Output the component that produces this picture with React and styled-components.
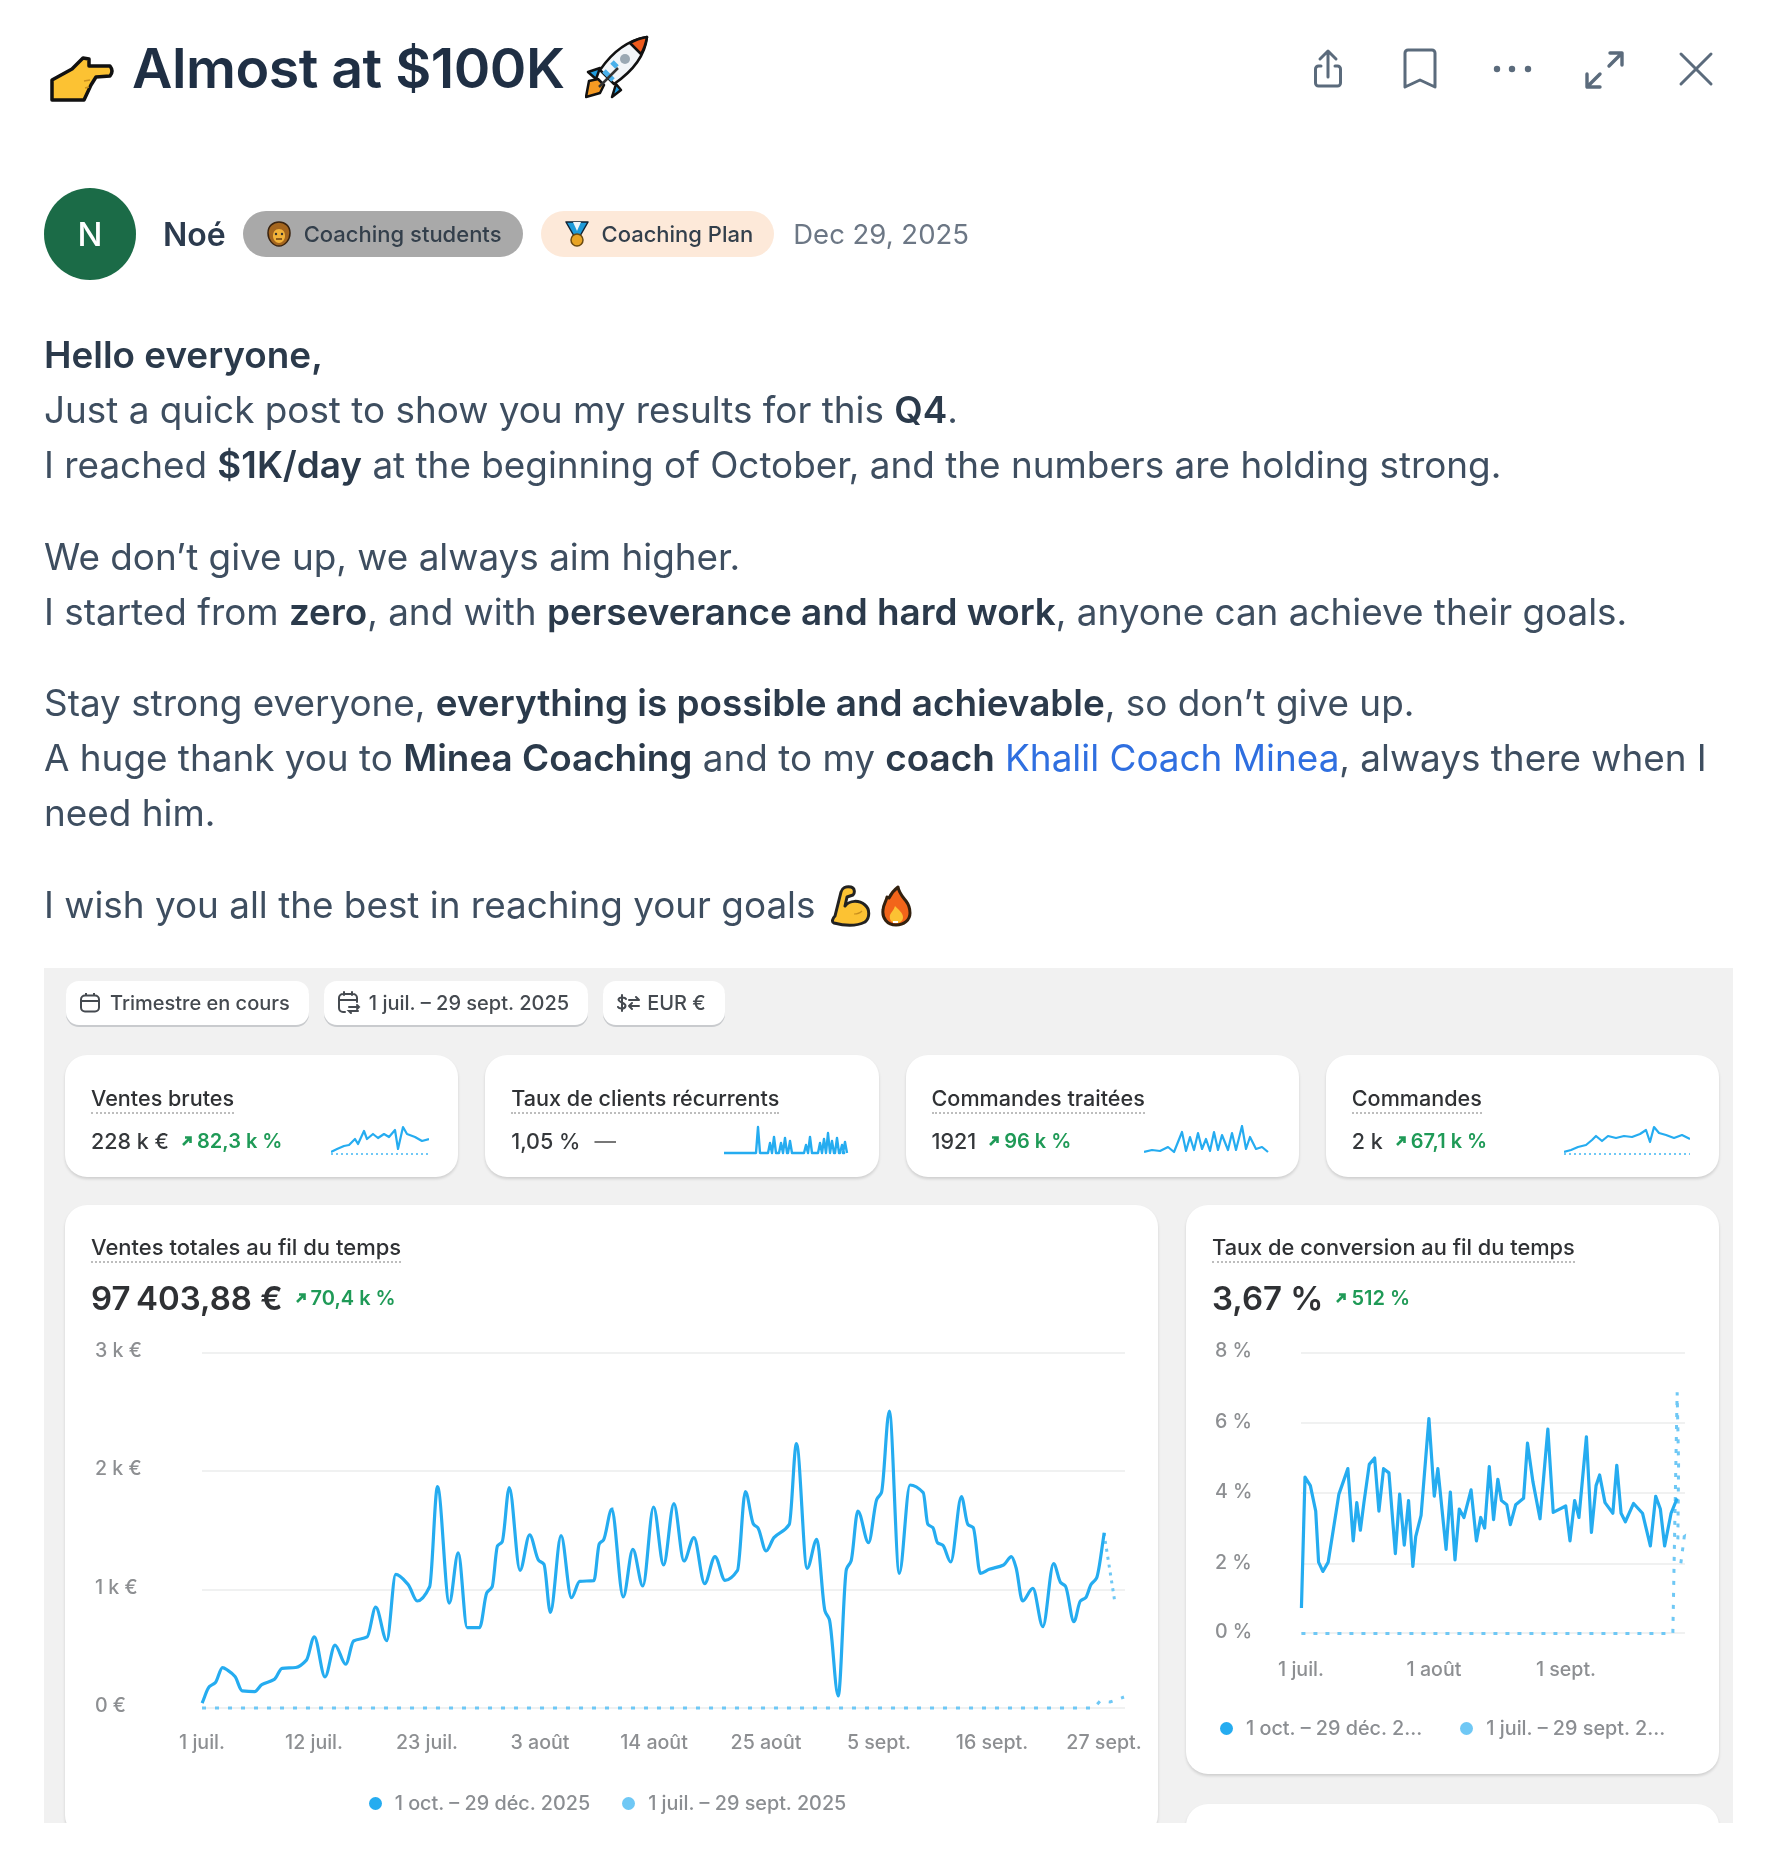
import React from "react";
import styled, { createGlobalStyle } from "styled-components";

const Global = createGlobalStyle`
  html, body { margin: 0; padding: 0; background: #fff; }
  body { font-family: Inter, "Noto Sans", "Liberation Sans", sans-serif; }
`;

const Page = styled.div`
  width: 1772px;
  height: 1866px;
  box-sizing: border-box;
  padding: 30px 39px 0 44px;
  overflow: hidden;
  background: #fff;
  filter: blur(0.6px);
`;

const Header = styled.header`
  display: flex;
  align-items: center;
  height: 78px;
  padding-right: 15px;
`;

const Title = styled.h1`
  margin: 0;
  padding-bottom: 4px;
  display: flex;
  align-items: center;
  font-size: 55.5px;
  font-weight: 600;
  letter-spacing: -0.5px;
  color: #1f2f44;
`;

const Actions = styled.div`
  margin-left: auto;
  display: flex;
  gap: 48px;
`;

const IconButton = styled.button`
  width: 44px;
  height: 44px;
  padding: 0;
  border: 0;
  background: none;
  color: #5b6b7c;
  svg { display: block; }
`;

const Author = styled.div`
  display: flex;
  align-items: center;
  margin-top: 80px;
`;

const Avatar = styled.div`
  width: 92px;
  height: 92px;
  border-radius: 50%;
  background: #1b6b47;
  color: #fff;
  font-size: 33px;
  font-weight: 500;
  display: flex;
  align-items: center;
  justify-content: center;
`;

const Name = styled.span`
  margin-left: 27px;
  font-size: 32px;
  font-weight: 600;
  color: #2c3b4e;
`;

const Badge = styled.span`
  height: 46px;
  box-sizing: border-box;
  margin-left: ${(p) => p.$gap}px;
  padding: 0 21px 0 23px;
  border-radius: 23px;
  background: ${(p) => p.$bg};
  display: flex;
  align-items: center;
  gap: 12px;
  font-size: 22px;
  font-weight: 500;
  color: #333f4b;
`;

const PostDate = styled.span`
  margin-left: 19px;
  font-size: 27.5px;
  color: #6c7785;
`;

const Body = styled.div`
  margin-top: 47px;
  font-size: 36.87px;
  line-height: 55px;
  color: #3e4e60;
  p { margin: 0 0 36.5px; }
  strong { font-weight: 600; color: #2b3a4b; }
  a { color: #2f6fe0; text-decoration: none; }
`;

const Panel = styled.section`
  height: 855px;
  margin-top: 1px;
  box-sizing: border-box;
  padding: 13px 14px 0 21px;
  background: #f1f1f1;
  overflow: hidden;
  filter: blur(0.45px);
`;

const Filters = styled.div`
  display: flex;
  gap: 15px;
  padding-left: 1px;
`;

const Pill = styled.div`
  height: 44px;
  box-sizing: border-box;
  padding: 0 19px 0 13px;
  border-radius: 13px;
  background: #fff;
  box-shadow: 0 2px 0 #c9cbce;
  display: flex;
  align-items: center;
  gap: ${(p) => p.$gap || 9}px;
  font-size: 20px;
  font-weight: 500;
  color: #454a50;
`;

const StatGrid = styled.div`
  display: grid;
  grid-template-columns: repeat(4, 1fr);
  gap: 27px;
  margin-top: 30px;
`;

const Card = styled.div`
  border-radius: 22px;
  background: #fff;
  box-shadow: 0 2px 3px rgba(0, 0, 0, 0.14);
`;

const StatCard = styled(Card)`
  height: 122px;
  box-sizing: border-box;
  padding: 30px 29px 0 26px;
`;

const Dotted = styled.span`
  display: inline-block;
  line-height: 26px;
  padding-bottom: 1px;
  font-size: ${(p) => p.$size || 21.6}px;
  font-weight: 500;
  color: #2f3134;
  border-bottom: 2px dotted #bdbdbd;
`;

const StatRow = styled.div`
  display: flex;
  align-items: center;
  height: 38px;
  margin-top: 8px;
  font-size: 21.5px;
  font-weight: 500;
  color: #35383b;
  svg:last-child { margin-left: auto; }
`;

const Delta = styled.span`
  display: inline-flex;
  align-items: center;
  gap: 5px;
  margin-left: ${(p) => p.$gap}px;
  font-size: 20px;
  font-weight: 600;
  color: #1f9a57;
`;

const Dash = styled.span`
  margin-left: 14px;
  color: #777;
`;

const MainGrid = styled.div`
  display: grid;
  grid-template-columns: 1093px 533px;
  gap: 28px;
  align-items: start;
  margin-top: 28px;
`;

const Column = styled.div`
  display: flex;
  flex-direction: column;
  gap: 30px;
`;

const ChartHead = styled.div`
  padding: 29px 26px 0;
`;

const BigValue = styled.div`
  display: flex;
  align-items: center;
  height: 40px;
  margin-top: 15px;
  font-size: 33px;
  font-weight: 600;
  color: #2f3134;
`;

const ChartSvg = styled.svg`
  display: block;
  width: 100%;
`;

const GridLine = styled.line`
  stroke: #f0f1f1;
  stroke-width: 2;
`;

const AxisLabel = styled.text`
  font-size: 19.6px;
  font-weight: 500;
  fill: #8d8f92;
`;

const Legend = styled.div`
  display: flex;
  justify-content: ${(p) => p.$compact ? "flex-start" : "center"};
  align-items: center;
  gap: ${(p) => p.$gap}px;
  height: 28px;
  padding: ${(p) => p.$pad};
  font-size: 19.8px;
  font-weight: 500;
  color: #8b8e92;
`;

const LegendItem = styled.span`
  display: flex;
  align-items: center;
  gap: 13px;
  &::before {
    content: "";
    width: 13px;
    height: 13px;
    border-radius: 50%;
    background: ${(p) => p.$color};
  }
`;

const EmptyCard = styled(Card)`
  height: 120px;
`;

const BLUE = "#25acf0";
const LIGHT = "#6fc8f5";

// d3 monotoneX-ish smoothing, the charts in the picture have that look
const smooth = (pts) => {
  const n = pts.length;
  const slope = (a, b) => (b[1] - a[1]) / (b[0] - a[0] || 1);
  const m = pts.map((p, i) => {
    if (i === 0) return slope(p, pts[1]);
    if (i === n - 1) return slope(pts[i - 1], p);
    const s0 = slope(pts[i - 1], p);
    const s1 = slope(p, pts[i + 1]);
    if (s0 * s1 <= 0) return 0;
    return (2 * s0 * s1) / (s0 + s1);
  });
  let d = `M${pts[0][0]} ${pts[0][1]}`;
  for (let i = 1; i < n; i++) {
    const a = pts[i - 1];
    const b = pts[i];
    const h = (b[0] - a[0]) / 3;
    d += `C${a[0] + h} ${a[1] + m[i - 1] * h} ${b[0] - h} ${b[1] - m[i] * h} ${b[0]} ${b[1]}`;
  }
  return d;
};

const straight = (pts) => "M" + pts.map((p) => p.join(" ")).join("L");

const mapPts = (raw, ox, oy, sx, sy) =>
  raw.map(([x, y]) => [ox + x / sx, oy + y / sy]);

const salesA = mapPts(
  [[398,1230],[418,1190],[435,1180],[455,1143],[470,1150],[490,1165],[510,1200],[545,1202],[565,1185],[600,1172],[622,1145],[660,1143],[690,1125],[712,1068],[742,1166],[770,1088],[800,1135],[822,1078],[860,1068],[884,995],[915,1077],[940,915],[975,940],[1000,980],[1035,945],[1057,700],[1090,985],[1115,862],[1140,1045],[1175,1045],[1195,960],[1210,945],[1225,845],[1238,835],[1258,702],[1288,905],[1315,818],[1340,880],[1355,890],[1373,1008],[1403,820],[1432,972],[1455,932],[1495,930],[1510,840],[1522,830],[1545,755]],
  60, 1200, 2.8, 2.45
);
const salesB = mapPts(
  [[33,445],[65,708],[92,565],[120,675],[150,438],[178,612],[207,428],[235,600],[263,530],[293,668],[322,587],[350,658],[385,628],[407,392],[430,490],[442,500],[465,570],[487,530],[530,490],[550,248],[580,622],[607,535],[630,750],[642,775],[667,1005],[690,625],[703,600],[722,450],[752,545],[775,415],[788,395],[810,150],[838,637],[868,372],[905,395],[918,490],[932,500],[945,545],[960,553],[982,603],[1012,407],[1030,490],[1045,500],[1065,637],[1090,625],[1130,612],[1152,587],[1165,620],[1183,720],[1212,682],[1240,797],[1270,608],[1290,665],[1303,675],[1327,782],[1345,720],[1360,710],[1375,670],[1390,652],[1412,515]],
  600, 1360, 2.8, 3
);
const salesLine = [...salesA, ...salesB];
const salesPrev = [
  [202, 1707], [1094, 1707], [1100, 1700], [1110, 1701], [1124, 1696],
];
const salesTail = [[1104, 1532], [1115, 1602]];

const convLine = mapPts(
  [[340,958],[350,650],[365,670],[380,730],[388,850],[400,872],[415,850],[430,770],[445,690],[470,630],[485,800],[495,710],[505,775],[515,710],[530,620],[545,605],[557,730],[570,630],[585,640],[603,830],[615,690],[628,810],[640,705],[652,860],[660,790],[675,740],[697,512],[712,695],[722,630],[745,820],[757,685],[770,845],[782,725],[795,745],[815,680],[830,800],[842,745],[853,770],[866,625],[878,750],[890,655],[900,705],[915,715],[925,762],[940,715],[962,700],[973,570],[988,660],[1008,748],[1030,537],[1045,733],[1080,718],[1092,800],[1105,705],[1117,745],[1138,555],[1152,780],[1165,670],[1175,645],[1190,710],[1212,735],[1223,622],[1235,735],[1247,755],[1270,712],[1295,735],[1317,812],[1332,695],[1345,725],[1357,812],[1375,735],[1392,700]],
  1180, 1200, 2.8, 2.354
);
const convPrev = mapPts(
  [[340,1018],[1380,1018],[1385,780],[1392,450],[1396,620],[1394,800],[1412,790],[1402,855]],
  1180, 1200, 2.8, 2.354
);

const sparkSales = [[0,27],[6,24],[13,21],[18,20],[24,14],[27,19],[33,6],[36,14],[42,9],[47,13],[53,9],[58,12],[64,5],[67,24],[72,2],[76,9],[84,12],[91,16],[98,14]];
const sparkOrders = [[0,27],[7,25],[14,22],[22,20],[28,15],[32,11],[38,16],[44,11],[52,13],[60,11],[68,12],[76,9],[82,5],[86,17],[90,2],[95,8],[102,10],[110,13],[118,10],[126,14]];
const spikes = (list, w) => {
  const out = [[0, 28]];
  list.forEach(([x, top]) => {
    out.push([x - 2, 28], [x, top], [x + 2, 28]);
  });
  out.push([w, 28]);
  return out;
};
const sparkReturning = spikes([[34,2],[46,18],[50,12],[57,18],[61,13],[66,16],[82,20],[86,12],[96,18],[100,14],[104,8],[108,16],[113,13],[118,20],[121,17]], 123);
const sparkTreated = [[0,27],[8,25],[16,26],[24,22],[30,27],[38,7],[42,26],[46,12],[50,25],[54,8],[58,24],[62,14],[66,26],[70,7],[74,25],[78,10],[84,25],[88,8],[92,25],[98,1],[102,24],[106,12],[112,24],[118,22],[124,27]];

const Spark = ({ pts, w, h = 32, dotted = true, thick = 2.2 }) => (
  <svg width={w} height={h} viewBox={`0 0 ${w} ${h}`} fill="none">
    {dotted && (
      <line x1="0" y1="29" x2={w} y2="29" stroke={LIGHT} strokeWidth="2" strokeDasharray="2 3" />
    )}
    <path d={straight(pts)} stroke={BLUE} strokeWidth={thick} strokeLinejoin="round" />
  </svg>
);

const Arrow = () => (
  <svg width="10" height="10" viewBox="0 0 10 10" fill="none" stroke="currentColor" strokeWidth="2.6">
    <path d="M1 9 8.5 1.5M3 1.5h5.5V7" />
  </svg>
);

const ShareIcon = () => (
  <svg width="44" height="44" viewBox="0 0 44 44" fill="none" stroke="currentColor" strokeWidth="3" strokeLinecap="round" strokeLinejoin="round">
    <path d="M22 5v25M14 12l8-8 8 8" />
    <path d="M15 19h-2.500a3 3 0 0 0-3 3v14a3 3 0 0 0 3 3h19a3 3 0 0 0 3-3V22a3 3 0 0 0-3-3H29" />
  </svg>
);
const BookmarkIcon = () => (
  <svg width="44" height="44" viewBox="0 0 44 44" fill="none" stroke="currentColor" strokeWidth="3" strokeLinejoin="round">
    <path d="M7 40V6a3 3 0 0 1 3-3h24a3 3 0 0 1 3 3v34l-15-7z" />
  </svg>
);
const DotsIcon = () => (
  <svg width="44" height="44" viewBox="0 0 44 44" fill="currentColor">
    <circle cx="7" cy="22" r="3.200" />
    <circle cx="22" cy="22" r="3.200" />
    <circle cx="38" cy="22" r="3.200" />
  </svg>
);
const ExpandIcon = () => (
  <svg width="44" height="44" viewBox="0 0 44 44" fill="none" stroke="currentColor" strokeWidth="3.400" strokeLinecap="round" strokeLinejoin="round">
    <path d="M28 6h12v12M40 6 27 19M5 27v13h13M5 40l13-13" />
  </svg>
);
const CloseIcon = () => (
  <svg width="44" height="44" viewBox="0 0 44 44" fill="none" stroke="currentColor" strokeWidth="3" strokeLinecap="round">
    <path d="M7 7 37 37M37 7 7 37" />
  </svg>
);

const HandEmoji = () => (
  <svg width="66" height="46" viewBox="0 0 66 46" style={{ marginLeft: 6, marginRight: 16, marginTop: 24 }}>
    <path d="M2 44V24L22 13 33 2l6 1v7h21q4 5 0 10L46 21l-5 8-7 15z" fill="#fcc233" stroke="#111" strokeWidth="3.500" strokeLinejoin="round" />
    <path d="M34 25l6-1M35 32l4-1" stroke="#c98f1e" strokeWidth="1.500" />
  </svg>
);

const RocketEmoji = () => (
  <svg width="64" height="64" viewBox="0 0 64 64" style={{ marginLeft: 20, marginTop: -1 }}>
    <path d="M13 44 4 46 1 62l14-4 4-8z" fill="#f59a23" stroke="#111" strokeWidth="2.500" strokeLinejoin="round" />
    <path d="M15 33 3 37l8 7zM31 49l-4 13 9-7z" fill="#1f9de0" stroke="#111" strokeWidth="2.500" strokeLinejoin="round" />
    <path d="M62 2C44 5 28 16 15 35l14 14C48 36 60 20 62 2z" fill="#f2f5f8" stroke="#111" strokeWidth="2.500" strokeLinejoin="round" />
    <path d="M62 2C56 3 50 5 45 8l11 11c3-5 5-11 6-17z" fill="#ef5a1c" stroke="#111" strokeWidth="2.500" strokeLinejoin="round" />
    <circle cx="40" cy="24" r="5" fill="#9aa8b3" />
    <path d="M19 36l9 9M27 27l5 5" stroke="#49b0ea" strokeWidth="5" />
    <path d="M14 52 33 33" stroke="#333" strokeWidth="2.500" />
  </svg>
);

const LionEmoji = () => (
  <svg width="26" height="26" viewBox="0 0 26 26">
    <path d="M13 1c6 0 11 4 11 11s-5 13-11 13S2 19 2 12 7 1 13 1z" fill="#a5661e" stroke="#3a2410" strokeWidth="1.500" />
    <path d="M13 8c4 0 6 3 6 7s-3 7-6 7-6-3-6-7 2-7 6-7z" fill="#f2b23a" />
    <circle cx="10" cy="13" r="1.200" fill="#333" />
    <circle cx="16" cy="13" r="1.200" fill="#333" />
    <path d="M10 18h6" stroke="#6a3f12" strokeWidth="1.500" />
  </svg>
);

const MedalEmoji = () => (
  <svg width="26" height="26" viewBox="0 0 26 26">
    <path d="M2 1h22l-8 14h-6z" fill="#1f9ad8" stroke="#123" strokeWidth="1.500" strokeLinejoin="round" />
    <path d="M9 1l4 9 4-9z" fill="#f2f6f8" />
    <circle cx="13" cy="19" r="6" fill="#e8a425" stroke="#6b4a10" strokeWidth="1.500" />
  </svg>
);

const ArmEmoji = () => (
  <svg width="42" height="42" viewBox="0 0 42 42" style={{ verticalAlign: -9, marginLeft: 14 }}>
    <path d="M5 31 11 7c1-4 5-6 10-5 4 1 4 6 2 8l-6 2-2 9c5-6 14-6 20-1 5 4 5 13 0 17-8 4-20 4-31 1-3-1-1-5 1-7z" fill="#fcc233" stroke="#222" strokeWidth="3" strokeLinejoin="round" />
    <path d="M24 29c3 0 6-1 8-3" stroke="#c98f1e" strokeWidth="1.200" fill="none" />
  </svg>
);

const FireEmoji = () => (
  <svg width="32" height="42" viewBox="0 0 32 42" style={{ verticalAlign: -9, marginLeft: 8 }}>
    <path d="M16 40C7 40 2 33 3 25c0-5 3-8 4-13l2 1c2-4 5-8 9-11 1 6 4 9 8 14 3 4 4 8 4 12 0 7-6 12-14 12z" fill="#f2651a" stroke="#33210f" strokeWidth="3" strokeLinejoin="round" />
    <path d="M16 38c-5 0-7-4-6-8 1-3 4-5 5-9 3 3 8 7 8 11 0 4-3 6-7 6z" fill="#fcc233" />
    <path d="M13 36h5v2h-5z" fill="#fff" />
  </svg>
);

const CalendarIcon = () => (
  <svg width="22" height="22" viewBox="0 0 22 22" fill="none" stroke="#454a50" strokeWidth="2">
    <rect x="2" y="3.500" width="18" height="16" rx="4" />
    <path d="M2 9h18M7 1v3M15 1v3" />
  </svg>
);
const CalendarSwapIcon = () => (
  <svg width="24" height="24" viewBox="0 0 24 24" fill="none" stroke="#454a50" strokeWidth="2" strokeLinecap="round">
    <path d="M8 21H6a4 4 0 0 1-4-4V7a4 4 0 0 1 4-4h10a4 4 0 0 1 4 4v4M2 9h18M7 1v3M15 1v3" />
    <path d="M12 16h10M20 14l2 2-2 2M14 22l-2-2h9" />
  </svg>
);
const CurrencyIcon = () => (
  <svg width="24" height="22" viewBox="0 0 24 22" fill="none" stroke="#454a50" strokeWidth="2" strokeLinecap="round">
    <path d="M10 7C9 5 3 4.500 2.500 7.500S10 10.500 9.500 14 3 17 2 15M6 3v16" />
    <path d="M13 8h10M20 5l3 3M23 14H13M16 11l-3 3M16 17l-3-3" />
  </svg>
);

const YLabels = ({ items, x }) =>
  items.map(([t, y]) => (
    <AxisLabel key={t} x={x} y={y + 6}>{t}</AxisLabel>
  ));

const XLabels = ({ items, y }) =>
  items.map(([t, x]) => (
    <AxisLabel key={t} x={x} y={y + 6} textAnchor="middle">{t}</AxisLabel>
  ));

const App = () => (
  <Page>
    <Global />
    <Header>
      <Title>
        <HandEmoji />
        Almost at $100K
        <RocketEmoji />
      </Title>
      <Actions>
        <IconButton><ShareIcon /></IconButton>
        <IconButton><BookmarkIcon /></IconButton>
        <IconButton><DotsIcon /></IconButton>
        <IconButton><ExpandIcon /></IconButton>
        <IconButton><CloseIcon /></IconButton>
      </Actions>
    </Header>

    <Author>
      <Avatar>N</Avatar>
      <Name>Noé</Name>
      <Badge $bg="#a9a9a9" $gap={17}><LionEmoji />Coaching students</Badge>
      <Badge $bg="#fde9d9" $gap={18}><MedalEmoji />Coaching Plan</Badge>
      <PostDate>Dec 29, 2025</PostDate>
    </Author>

    <Body>
      <p>
        <strong>Hello everyone,</strong><br />
        Just a quick post to show you my results for this <strong>Q4</strong>.<br />
        I reached <strong>$1K/day</strong> at the beginning of October, and the numbers are holding strong.
      </p>
      <p>
        We don’t give up, we always aim higher.<br />
        I started from <strong>zero</strong>, and with <strong>perseverance and hard work</strong>, anyone can achieve their goals.
      </p>
      <p>
        Stay strong everyone, <strong>everything is possible and achievable</strong>, so don’t give up.<br />
        A huge thank you to <strong>Minea Coaching</strong> and to my <strong>coach</strong> <a href="#coach">Khalil Coach Minea</a>, always there when I need him.
      </p>
      <p>
        I wish you all the best in reaching your goals
        <ArmEmoji />
        <FireEmoji />
      </p>
    </Body>

    <Panel>
      <Filters>
        <Pill><CalendarIcon />Trimestre en cours</Pill>
        <Pill $gap={8}><CalendarSwapIcon />1 juil. – 29 sept. 2025</Pill>
        <Pill $gap={7}><CurrencyIcon />EUR €</Pill>
      </Filters>

      <StatGrid>
        <StatCard>
          <Dotted>Ventes brutes</Dotted>
          <StatRow>
            228 k €
            <Delta $gap={13}><Arrow />82,3 k %</Delta>
            <Spark pts={sparkSales} w={98} />
          </StatRow>
        </StatCard>
        <StatCard>
          <Dotted>Taux de clients récurrents</Dotted>
          <StatRow>
            1,05 %
            <Dash>—</Dash>
            <Spark pts={sparkReturning} w={126} dotted={false} thick={2.4} />
          </StatRow>
        </StatCard>
        <StatCard>
          <Dotted>Commandes traitées</Dotted>
          <StatRow>
            1921
            <Delta $gap={13}><Arrow />96 k %</Delta>
            <Spark pts={sparkTreated} w={126} dotted={false} />
          </StatRow>
        </StatCard>
        <StatCard>
          <Dotted>Commandes</Dotted>
          <StatRow>
            2 k
            <Delta $gap={13}><Arrow />67,1 k %</Delta>
            <Spark pts={sparkOrders} w={126} />
          </StatRow>
        </StatCard>
      </StatGrid>

      <MainGrid>
        <Card>
          <ChartHead>
            <Dotted $size={22}>Ventes totales au fil du temps</Dotted>
            <BigValue>
              97{"\u202f"}403,88 €
              <Delta $gap={13}><Arrow />70,4 k %</Delta>
            </BigValue>
          </ChartHead>
          <ChartSvg viewBox="65 1317 1093 462" fill="none">
            {[1352, 1470, 1589, 1707].map((y) => (
              <GridLine key={y} x1="202" x2="1125" y1={y} y2={y} />
            ))}
            <YLabels x={95} items={[["3 k €", 1350], ["2 k €", 1468], ["1 k €", 1587], ["0 €", 1705]]} />
            <XLabels
              y={1742}
              items={[["1 juil.", 202], ["12 juil.", 314], ["23 juil.", 427], ["3 août", 540], ["14 août", 654], ["25 août", 766], ["5 sept.", 879], ["16 sept.", 992], ["27 sept.", 1104]]}
            />
            <path d={straight(salesPrev)} stroke={LIGHT} strokeWidth="3" strokeDasharray="4 9" />
            <path d={straight(salesTail)} stroke={LIGHT} strokeWidth="3" strokeDasharray="3 5" />
            <path d={smooth(salesLine)} stroke={BLUE} strokeWidth="3.200" />
          </ChartSvg>
          <Legend $gap={32} $pad="9px 8px 20px 0">
            <LegendItem $color={BLUE}>1 oct. – 29 déc. 2025</LegendItem>
            <LegendItem $color={LIGHT}>1 juil. – 29 sept. 2025</LegendItem>
          </Legend>
        </Card>

        <Column>
          <Card>
            <ChartHead>
              <Dotted $size={21.8}>Taux de conversion au fil du temps</Dotted>
              <BigValue>
                3,67 %
                <Delta $gap={13}><Arrow />512 %</Delta>
              </BigValue>
            </ChartHead>
            <ChartSvg viewBox="1186 1317 533 377" fill="none">
              {[1352, 1422, 1492, 1563, 1632].map((y) => (
                <GridLine key={y} x1="1301" x2="1685" y1={y} y2={y} />
              ))}
              <YLabels x={1215} items={[["8 %", 1350], ["6 %", 1421], ["4 %", 1491], ["2 %", 1562], ["0 %", 1631]]} />
              <XLabels y={1669} items={[["1 juil.", 1301], ["1 août", 1434], ["1 sept.", 1566]]} />
              <path d={straight(convPrev)} stroke={LIGHT} strokeWidth="3" strokeDasharray="4 8" />
              <path d={straight(convLine)} stroke={BLUE} strokeWidth="3.200" strokeLinejoin="round" />
            </ChartSvg>
            <Legend $compact $gap={38} $pad="19px 0 32px 34px">
              <LegendItem $color={BLUE}>1 oct. – 29 déc. 2...</LegendItem>
              <LegendItem $color={LIGHT}>1 juil. – 29 sept. 2...</LegendItem>
            </Legend>
          </Card>
          <EmptyCard />
        </Column>
      </MainGrid>
    </Panel>
  </Page>
);

export default App;
